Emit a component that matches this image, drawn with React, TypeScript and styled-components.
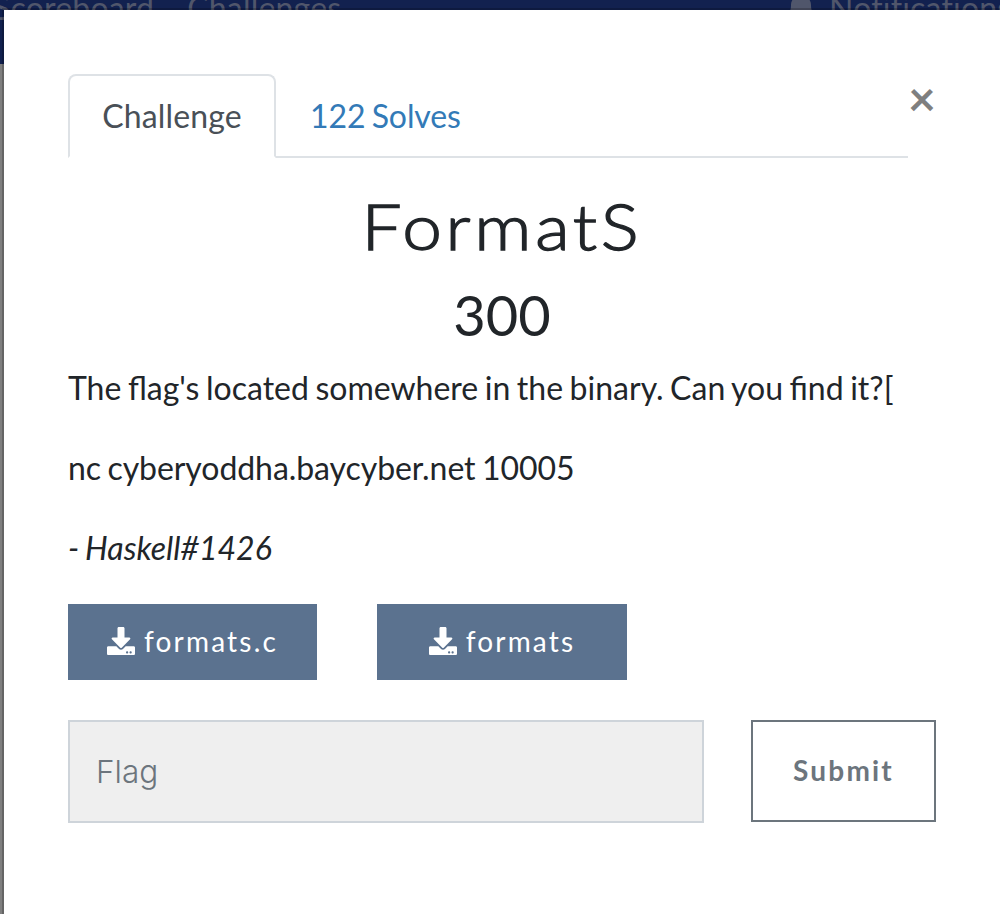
import React from 'react';
import styled, { createGlobalStyle } from 'styled-components';
import { FaBell, FaDownload } from 'react-icons/fa';

const GlobalStyle = createGlobalStyle`
  *, *::before, *::after { box-sizing: border-box; }
  html, body { margin: 0; padding: 0; }
  body {
    overflow: hidden;
    background: #7f7f7f;
    color: #212529;
    font-family: Lato, sans-serif;
    font-size: 32px;
    line-height: 48px;
  }
`;

const Page = styled.div`
  position: relative;
  height: 914px;
  overflow: hidden;
`;

const Navbar = styled.nav`
  display: flex;
  justify-content: space-between;
  height: 64px;
  background: #12214f;
  color: #50566b;
  letter-spacing: 0.2px;
`;

const NavGroup = styled.div<{ $shift: number }>`
  display: flex;
  gap: 33px;
  margin-top: -16px;
  margin-left: ${({ $shift }) => $shift}px;
  white-space: nowrap;
`;

const NavLink = styled.span`
  display: flex;
  align-items: center;
  gap: 12px;
  height: 48px;
`;

const RightNav = styled(NavGroup)`
  width: 215px;
`;

const Dialog = styled.section`
  position: absolute;
  top: 8px;
  left: 2px;
  width: 1010px;
  height: 930px;
  padding: 64px;
  border: 2px solid rgba(0, 0, 0, 0.2);
  background: #fff;
  background-clip: padding-box;
`;

const Content = styled.div`
  width: 868px;
`;

const Header = styled.header`
  display: flex;
  justify-content: space-between;
  align-items: flex-start;
  height: 84px;
`;

const Tabs = styled.div`
  display: flex;
  width: 840px;
  height: 84px;
  border-bottom: 2px solid #dee2e6;
`;

const Tab = styled.button<{ $active?: boolean }>`
  height: 84px;
  padding: 0 32px;
  border: 2px solid ${({ $active }) => ($active ? '#dee2e6' : 'transparent')};
  border-bottom-color: ${({ $active }) => ($active ? '#fff' : 'transparent')};
  border-radius: 8px 8px 0 0;
  background: ${({ $active }) => ($active ? '#fff' : 'transparent')};
  color: ${({ $active }) => ($active ? '#495057' : '#337ab7')};
  font: inherit;
  letter-spacing: ${({ $active }) => ($active ? '0.15px' : '-0.1px')};
  word-spacing: -1.8px;
  ${({ $active }) => $active && 'width: 208px;'}
`;

const Close = styled.button`
  width: 28px;
  height: 48px;
  padding: 0;
  border: 0;
  background: none;
  color: #7f7f7f;
  font: bold 48px/48px Lato, sans-serif;
`;

const Title = styled.h2`
  margin: 29px 0 0;
  font-size: 64px;
  font-weight: 300;
  line-height: 77px;
  letter-spacing: 3.3px;
  text-align: center;
  transform: scaleX(1.11);
  -webkit-text-stroke: 1.3px #212529;
`;

const Points = styled.h3`
  margin: 17px 0 0;
  font-size: 56px;
  font-weight: 400;
  line-height: 68px;
  text-align: center;
`;

const Description = styled.div`
  display: grid;
  gap: 32px;
  margin-top: 15px;
  white-space: nowrap;
  word-spacing: -1.65px;

  p { margin: 0; }
`;

const Address = styled.p`
  letter-spacing: -0.07px;
`;

const Files = styled.div`
  display: flex;
  gap: 60px;
  margin-top: 32px;
`;

const FileButton = styled.button<{ $width: number }>`
  display: flex;
  align-items: center;
  justify-content: center;
  gap: 9px;
  width: ${({ $width }) => $width}px;
  height: 76px;
  padding: 0 0 2px;
  border: 0;
  background: #5b728f;
  color: #fff;
  font: 28px/42px Lato, sans-serif;
  letter-spacing: 2.2px;
`;

const SubmitRow = styled.form`
  display: flex;
  justify-content: space-between;
  margin-top: 40px;
`;

const FlagInput = styled.input`
  width: 636px;
  height: 103px;
  padding: 0 26px;
  border: 2px solid #ced4da;
  border-radius: 0;
  background: #efefef;
  font: 300 31.5px Inter, sans-serif;

  &::placeholder { color: #6c757d; opacity: 1; }
`;

const SubmitButton = styled.button`
  width: 185px;
  height: 102px;
  padding: 0 0 2px;
  border: 2px solid #6c757d;
  background: #fff;
  color: #6c757d;
  font: bold 28px/42px Lato, sans-serif;
  letter-spacing: 2.2px;
`;

export default function App() {
  return (
    <Page>
      <GlobalStyle />
      <Navbar>
        <NavGroup $shift={-7}>
          <NavLink>Scoreboard</NavLink>
          <NavLink>Challenges</NavLink>
        </NavGroup>
        <RightNav $shift={0}>
          <NavLink><FaBell size={32} />Notifications</NavLink>
        </RightNav>
      </Navbar>
      <Dialog role="dialog">
        <Content>
          <Header>
            <Tabs>
              <Tab $active>Challenge</Tab>
              <Tab>122 Solves</Tab>
            </Tabs>
            <Close aria-label="Close">×</Close>
          </Header>
          <Title>FormatS</Title>
          <Points>300</Points>
          <Description>
            <p>The flag's located somewhere in the binary. Can you find it?[</p>
            <Address>nc cyberyoddha.baycyber.net 10005</Address>
            <p><em>- Haskell#1426</em></p>
          </Description>
          <Files>
            <FileButton $width={249}><FaDownload />formats.c</FileButton>
            <FileButton $width={250}><FaDownload />formats</FileButton>
          </Files>
          <SubmitRow>
            <FlagInput placeholder="Flag" />
            <SubmitButton type="button">Submit</SubmitButton>
          </SubmitRow>
        </Content>
      </Dialog>
    </Page>
  );
}
